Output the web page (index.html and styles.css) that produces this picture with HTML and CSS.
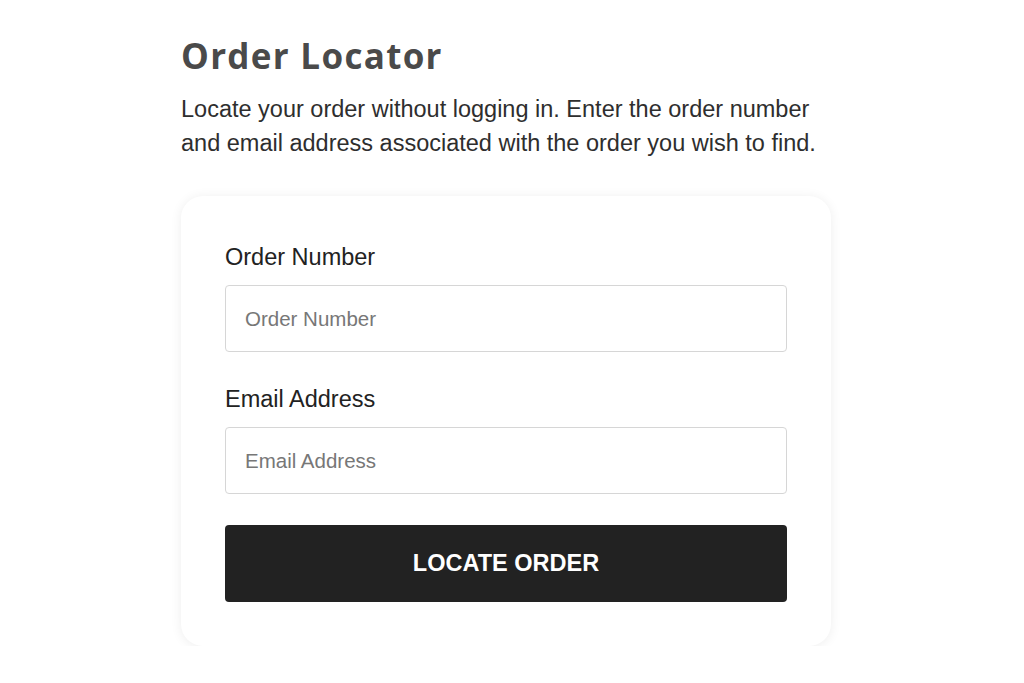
FILE: index.html
```html
<!DOCTYPE html>
<html lang="en">
<head>
<meta charset="utf-8">
<title>Order Locator</title>
<link rel="stylesheet" href="styles.css">
</head>
<body>
<main class="page">
  <h1 class="title">Order Locator</h1>
  <p class="intro">Locate your order without logging in. Enter the order number and email address associated with the order you wish to find.</p>
  <form class="card">
    <label class="label" for="order">Order Number</label>
    <input class="field" id="order" type="text" placeholder="Order Number">
    <label class="label" for="email">Email Address</label>
    <input class="field field-last" id="email" type="email" placeholder="Email Address">
    <button class="btn" type="button">LOCATE ORDER</button>
  </form>
</main>
</body>
</html>
```
FILE: styles.css
```css
html, body {
  margin: 0;
  padding: 0;
  background: #ffffff;
}
body {
  font-family: "Liberation Sans", Arial, sans-serif;
  color: #333333;
}
.page {
  width: 650px;
  margin: 0 0 0 181px;
  padding-top: 34px;
}
.title {
  margin: 0;
  font-family: "Open Sans", "Liberation Sans", sans-serif;
  font-weight: 700;
  font-size: 35px;
  line-height: 44px;
  color: #4a4a4a;
  letter-spacing: 1.3px;
}
.intro {
  margin: 14px 0 0 0;
  font-size: 23.5px;
  line-height: 34px;
  color: #2e2e2e;
  width: 645px;
}
.card {
  margin-top: 36px;
  box-sizing: border-box;
  width: 650px;
  border-radius: 22px;
  background: #fff;
  box-shadow: 0 1px 12px rgba(0,0,0,0.07);
  padding: 49px 44px 44px 44px;
  display: flex;
  flex-direction: column;
}
.label {
  font-size: 23.5px;
  line-height: 24px;
  color: #222;
  margin-bottom: 16px;
}
.field {
  box-sizing: border-box;
  height: 67px;
  border: 1px solid #d6d6d6;
  border-radius: 4px;
  padding: 0 19px;
  font-family: "Liberation Sans", Arial, sans-serif;
  font-size: 20.5px;
  color: #333;
  margin-bottom: 35px;
  outline: none;
}
.field::placeholder {
  color: #777;
}
.field-last {
  margin-bottom: 31px;
}
.btn {
  height: 77px;
  border: none;
  border-radius: 4px;
  background: #222222;
  color: #fff;
  font-family: "Liberation Sans", Arial, sans-serif;
  font-weight: 700;
  font-size: 23.5px;
  cursor: pointer;
}
```
